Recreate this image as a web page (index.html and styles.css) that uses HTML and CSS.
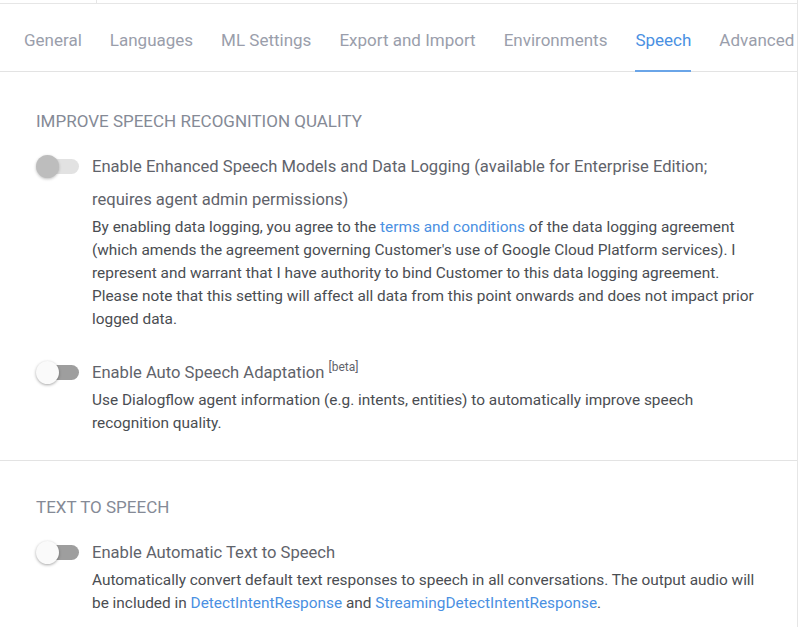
FILE: index.html
```html
<!DOCTYPE html>
<html>
<head>
<meta charset="utf-8">
<link rel="stylesheet" href="styles.css">
</head>
<body>
<div class="frame">
  <div class="topstrip"><div class="topcell"></div></div>
  <nav class="tabs">
    <span class="tab">General</span>
    <span class="tab">Languages</span>
    <span class="tab">ML Settings</span>
    <span class="tab">Export and Import</span>
    <span class="tab">Environments</span>
    <span class="tab active">Speech</span>
    <span class="tab">Advanced</span>
  </nav>
  <section class="section first">
    <h2 class="heading">IMPROVE SPEECH RECOGNITION QUALITY</h2>
    <div class="row">
      <div class="toggle disabled"><span class="track"></span><span class="thumb"></span></div>
      <div class="body">
        <div class="label">Enable Enhanced Speech Models and Data Logging (available for Enterprise Edition; requires agent admin permissions)</div>
        <div class="desc">By enabling data logging, you agree to the <a class="link">terms and conditions</a> of the data logging agreement (which amends the agreement governing Customer's use of Google Cloud Platform services). I represent and warrant that I have authority to bind Customer to this data logging agreement. Please note that this setting will affect all data from this point onwards and does not impact prior logged data.</div>
      </div>
    </div>
    <div class="row second">
      <div class="toggle"><span class="track"></span><span class="thumb"></span></div>
      <div class="body">
        <div class="label">Enable Auto Speech Adaptation <sup class="beta">[beta]</sup></div>
        <div class="desc">Use Dialogflow agent information (e.g. intents, entities) to automatically improve speech recognition quality.</div>
      </div>
    </div>
  </section>
  <section class="section tts">
    <h2 class="heading">TEXT TO SPEECH</h2>
    <div class="row">
      <div class="toggle"><span class="track"></span><span class="thumb"></span></div>
      <div class="body">
        <div class="label">Enable Automatic Text to Speech</div>
        <div class="desc">Automatically convert default text responses to speech in all conversations. The output audio will be included in <a class="link">DetectIntentResponse</a> and <a class="link">StreamingDetectIntentResponse</a>.</div>
      </div>
    </div>
  </section>
</div>
</body>
</html>
```
FILE: styles.css
```css
html, body {
  margin: 0;
  padding: 0;
  background: #ffffff;
  font-family: Roboto, "Liberation Sans", sans-serif;
}
.frame {
  width: 797px;
  height: 627px;
  border-right: 1px solid #e6e6e6;
  overflow: hidden;
}
.topstrip {
  height: 3px;
  border-bottom: 1px solid #e6e6e6;
}
.topcell {
  width: 96px;
  height: 3px;
  border-right: 1px solid #e6e6e6;
}
.tabs {
  display: flex;
  box-sizing: border-box;
  height: 68px;
  padding-left: 24px;
  gap: 28px;
  border-bottom: 1px solid #e3e3e3;
}
.tab {
  display: flex;
  align-items: center;
  padding-top: 6px;
  font-size: 17px;
  color: #9a9eab;
  white-space: nowrap;
  border-bottom: 2px solid transparent;
  margin-bottom: -1px;
}
.tab.active {
  color: #4a90e2;
  border-bottom-color: #6aa5e8;
}
.section {
  padding: 39px 0 25px 36px;
}
.section.first {
  border-bottom: 1px solid #e3e3e3;
}
.section.tts {
  padding-top: 36px;
}
.heading {
  margin: 0;
  font-size: 17px;
  font-weight: 400;
  line-height: 20px;
  color: #858a96;
}
.row {
  display: flex;
  margin-top: 19px;
}
.row.second {
  margin-top: 25px;
}
.toggle {
  position: relative;
  width: 56px;
  height: 33px;
  flex: none;
}
.track {
  position: absolute;
  left: 3px;
  top: 9px;
  width: 40px;
  height: 15px;
  border-radius: 8px;
  background: #9e9e9e;
}
.thumb {
  position: absolute;
  left: 0;
  top: 5px;
  width: 23px;
  height: 23px;
  border-radius: 50%;
  background: #fafafa;
  box-shadow: 0 1px 3px rgba(0,0,0,0.35);
}
.toggle.disabled .track {
  background: #e2e2e2;
}
.toggle.disabled .thumb {
  background: #bdbdbd;
  box-shadow: 0 1px 3px rgba(0,0,0,0.25);
}
.body {
  flex: 1;
  padding-right: 32px;
}
.label {
  font-size: 16.6px;
  line-height: 33px;
  color: #5f636b;
}
.beta {
  font-size: 12px;
  line-height: 0;
  vertical-align: 7px;
}
.desc {
  font-size: 15.4px;
  line-height: 23px;
  color: #4a4d52;
}
.link {
  color: #4a90e2;
  text-decoration: none;
}
```
